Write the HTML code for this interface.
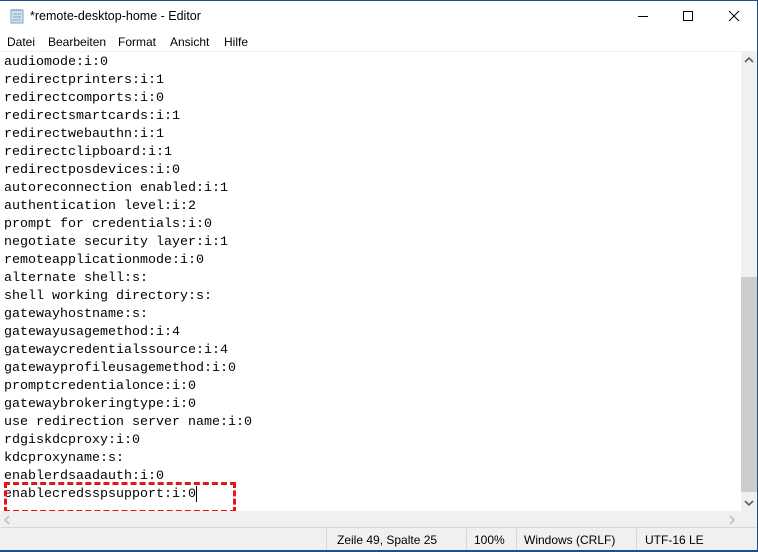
<!DOCTYPE html>
<html><head><meta charset="utf-8"><style>
*{margin:0;padding:0;box-sizing:border-box}
body{width:758px;height:552px;overflow:hidden;background:#fff;position:relative;font-family:"Liberation Sans",sans-serif}
.abs{position:absolute}
#top{left:0;top:0;width:758px;height:1px;background:#1f4e8c}
#title{left:30px;top:9px;font-size:12.5px;color:#000}
#menu{left:0;top:32px;width:741px;height:19px;font-size:12px}
#menu span{position:absolute;top:3px}
#text{left:4px;top:52px;font-family:"Liberation Mono",monospace;font-size:13.33px;line-height:18px;color:#000;white-space:pre;padding-top:2px}
#vs{left:741px;top:51px;width:16px;height:460px;background:#f0f0f0}
#thumb{left:741px;top:277px;width:16px;height:215px;background:#cdcdcd}
#hs{left:0;top:511px;width:757px;height:16px;background:#f0f0f0}
#status{left:0;top:527px;width:757px;height:23px;background:#f0f0f0;border-top:1px solid #d7d7d7;font-size:12px}
#status span{position:absolute;top:5px}
.sep{position:absolute;top:1px;width:1px;height:21px;background:#d7d7d7}
#bot{left:0;top:550px;width:758px;height:2px;background:#1f4e8c}
#right{left:757px;top:0;width:1px;height:552px;background:#1f4e8c}
#box{left:4px;top:482px;width:232px;height:31px;border:3px dashed #e8141b}
</style></head><body>
<div class="abs" id="top"></div>
<svg class="abs" style="left:9px;top:8px" width="16" height="16"><rect x="2" y="2" width="12" height="13" fill="#cde4f2" stroke="#7aa6c2"/><line x1="4" y1="6" x2="12" y2="6" stroke="#7aa6c2"/><line x1="4" y1="9" x2="12" y2="9" stroke="#7aa6c2"/><line x1="4" y1="12" x2="12" y2="12" stroke="#7aa6c2"/><line x1="3" y1="2" x2="13" y2="2" stroke="#555" stroke-dasharray="1 1"/></svg>
<div class="abs" id="title">*remote-desktop-home - Editor</div>
<svg class="abs" style="left:630px;top:8px" width="120" height="18"><line x1="8" y1="8.5" x2="18" y2="8.5" stroke="#000"/><rect x="53.5" y="3.5" width="9" height="9" fill="none" stroke="#000"/><path d="M99 3 L109 13 M109 3 L99 13" stroke="#000"/></svg>
<div class="abs" id="menu"><span style="left:7px">Datei</span><span style="left:48px">Bearbeiten</span><span style="left:118px">Format</span><span style="left:170px">Ansicht</span><span style="left:224px">Hilfe</span></div>
<div class="abs" style="left:0;top:51px;width:741px;height:1px;background:#f0f0f0"></div>
<div class="abs" id="text">audiomode:i:0
redirectprinters:i:1
redirectcomports:i:0
redirectsmartcards:i:1
redirectwebauthn:i:1
redirectclipboard:i:1
redirectposdevices:i:0
autoreconnection enabled:i:1
authentication level:i:2
prompt for credentials:i:0
negotiate security layer:i:1
remoteapplicationmode:i:0
alternate shell:s:
shell working directory:s:
gatewayhostname:s:
gatewayusagemethod:i:4
gatewaycredentialssource:i:4
gatewayprofileusagemethod:i:0
promptcredentialonce:i:0
gatewaybrokeringtype:i:0
use redirection server name:i:0
rdgiskdcproxy:i:0
kdcproxyname:s:
enablerdsaadauth:i:0
enablecredsspsupport:i:0</div>
<div class="abs" style="left:196px;top:486px;width:1px;height:16px;background:#000"></div>
<div class="abs" id="box"></div>
<div class="abs" id="vs"></div>
<div class="abs" id="thumb"></div>
<svg class="abs" style="left:741px;top:55px" width="16" height="10"><path d="M4 7 L8 3 L12 7" fill="none" stroke="#606060" stroke-width="1.6"/></svg>
<svg class="abs" style="left:741px;top:498px" width="16" height="10"><path d="M4 3 L8 7 L12 3" fill="none" stroke="#606060" stroke-width="1.6"/></svg>
<div class="abs" id="hs"></div>
<svg class="abs" style="left:2px;top:514px" width="10" height="12"><path d="M7 2 L3 6 L7 10" fill="none" stroke="#c0c0c0" stroke-width="1.6"/></svg>
<svg class="abs" style="left:727px;top:514px" width="10" height="12"><path d="M3 2 L7 6 L3 10" fill="none" stroke="#c0c0c0" stroke-width="1.6"/></svg>
<div class="abs" id="status">
<div class="sep" style="left:326px"></div><div class="sep" style="left:466px"></div><div class="sep" style="left:516px"></div><div class="sep" style="left:636px"></div>
<span style="left:337px">Zeile 49, Spalte 25</span><span style="left:474px">100%</span><span style="left:524px">Windows (CRLF)</span><span style="left:645px">UTF-16 LE</span>
</div>
<div class="abs" id="bot"></div>
<div class="abs" id="right"></div>
</body></html>
